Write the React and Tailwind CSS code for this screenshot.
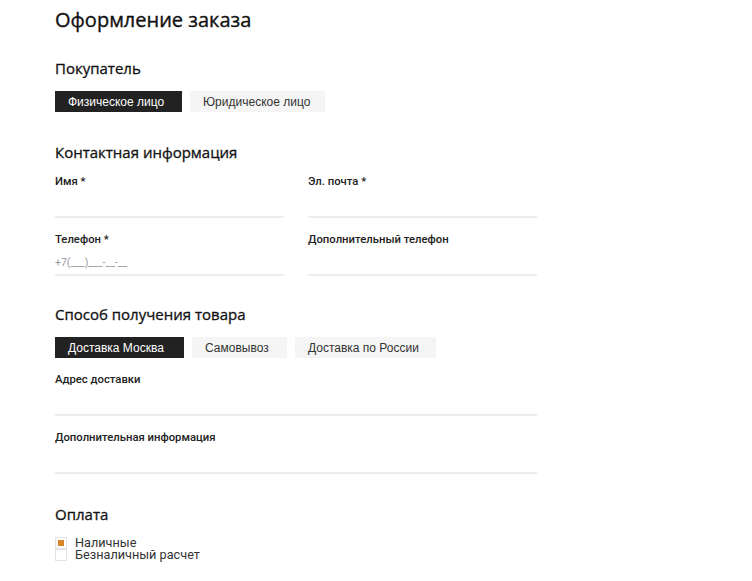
import React, { useState } from 'react'

const heading = "font-['Open_Sans',sans-serif] font-normal text-[15px] text-[#111] leading-5 [-webkit-text-stroke:0.3px_#111]"
const label = "pt-[2px] font-['Roboto',sans-serif] font-medium text-[11.3px] text-[#222] leading-4"
const line = 'h-[2px] bg-[#ececec]'

function Tabs({ items, value, onChange, widths }) {
  return (
    <div className="flex gap-2">
      {items.map((t, i) => (
        <button
          key={t}
          onClick={() => onChange(t)}
          className={`${widths[i]} h-[21px] pl-[13px] text-left font-['Liberation_Sans',Arial,sans-serif] text-[12px] leading-none ${
            value === t ? 'bg-[#222] text-white' : 'bg-[#f5f5f5] text-[#333]'
          }`}
        >
          {t}
        </button>
      ))}
    </div>
  )
}

function Field({ title, placeholder, wide }) {
  return (
    <div className={wide ? 'w-[482px]' : 'w-[229px]'}>
      <div className={label}>{title}</div>
      <div className="flex h-[22px] items-end font-['Roboto',sans-serif] text-[10.5px] leading-[14px] text-[#999]">
        {placeholder}
      </div>
      <div className={`mt-[4px] ${line}`} />
    </div>
  )
}

export default function App() {
  const [buyer, setBuyer] = useState('Физическое лицо')
  const [delivery, setDelivery] = useState('Доставка Москва')
  const [pay, setPay] = useState('cash')

  return (
    <div className="min-h-[581px] w-full bg-white pl-[55px] pt-[6px]">
      <h1 className="font-['Open_Sans',sans-serif] text-[20px] font-normal leading-7 text-[#111] [-webkit-text-stroke:0.35px_#111]">
        Оформление заказа
      </h1>

      <h2 className={`mt-[24px] ${heading}`}>Покупатель</h2>
      <div className="mt-[13px]">
        <Tabs
          items={['Физическое лицо', 'Юридическое лицо']}
          widths={['w-[127px]', 'w-[135px]']}
          value={buyer}
          onChange={setBuyer}
        />
      </div>

      <h2 className={`mt-[30px] ${heading}`}>Контактная информация</h2>
      <div className="mt-[10px] grid w-[482px] grid-cols-[229px_229px] gap-x-[24px] gap-y-[12px]">
        <Field title="Имя *" />
        <Field title="Эл. почта *" />
        <Field title="Телефон *" placeholder="+7(___)___-__-__" />
        <Field title="Дополнительный телефон" />
      </div>

      <h2 className={`mt-[28px] ${heading}`}>Способ получения товара</h2>
      <div className="mt-[13px]">
        <Tabs
          items={['Доставка Москва', 'Самовывоз', 'Доставка по России']}
          widths={['w-[129px]', 'w-[95px]', 'w-[141px]']}
          value={delivery}
          onChange={setDelivery}
        />
      </div>
      <div className="mt-[12px] flex flex-col gap-[12px]">
        <Field title="Адрес доставки" wide />
        <Field title="Дополнительная информация" wide />
      </div>

      <h2 className={`mt-[30px] ${heading}`}>Оплата</h2>
      <div className="mt-[13px] flex flex-col font-['Roboto',sans-serif] text-[12.7px] leading-[12px] text-[#333]">
        {[
          ['cash', 'Наличные'],
          ['card', 'Безналичный расчет'],
        ].map(([k, t]) => (
          <label key={k} className="flex h-[12px] cursor-pointer items-center gap-[8px]" onClick={() => setPay(k)}>
            <span className="flex h-[12px] w-[12px] items-center justify-center border border-[#e3e3e3] bg-white">
              {pay === k && <span className="h-[6px] w-[6px] bg-[#d9862b]" />}
            </span>
            <span>{t}</span>
          </label>
        ))}
      </div>
    </div>
  )
}
